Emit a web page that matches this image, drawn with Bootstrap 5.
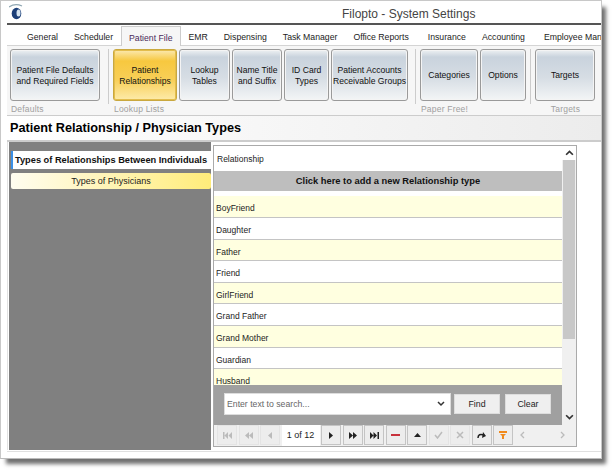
<!DOCTYPE html>
<html lang="en">
<head>
<meta charset="UTF-8">
<title>Filopto - System Settings</title>
<link href="https://cdn.jsdelivr.net/npm/bootstrap@5.3.0/dist/css/bootstrap.min.css" rel="stylesheet">
<style>
    html, body { height: 474px; overflow: hidden; background: #fff; }
    body { font-family: "Liberation Sans", Arial, sans-serif; font-size: 8.5px; color: #1c1c1c; }
    .app-window { width: 602px; height: 459px; padding-left: 6px; background: #fff; border: 1px solid #c8c8c8; border-bottom-color: #bbb; box-shadow: 5px 6px 4px -1px #707070; overflow: hidden; }
    .title-bar { height: 24px; border-bottom: 2px solid #555; position: relative; font-size: 12px; color: #444; padding: 4px 0 0 335px; }
    .title-bar svg { position: absolute; left: 2px; top: 2px; }
    .menu-tabs { height: 21px; padding-left: 12px; font-size: 8.7px; white-space: nowrap; border-bottom: 1px solid #d4d4d4; }
    .menu-tabs span { padding: 6px 8px 0; }
    .menu-tabs .active { background: #f6f6f6; border: 1px solid #ccc; border-bottom: 0; height: 20px; margin-top: 1px; padding: 5px 7px 0; color: #4a2a5a; }
    .menu-tabs .shift { margin-left: 3px; }
    .ribbon { height: 70px; background: #f6f6f6; border-bottom: 1px solid #ccc; padding: 3px 0 0 3px; }
    .ribbon-group { display: flex; flex-direction: column; }
    .ribbon-group .btn-row { display: flex; gap: 2px; }
    .ribbon-group .group-label { font-size: 8.5px; color: #a0a0a0; margin: 2px 0 0 1px; letter-spacing: .2px; }
    .ribbon-sep { width: 1px; height: 55px; background: #ccc; margin: 0 4px 0 7px; }
    .ribbon-sep.first { margin-left: 8px; }
    .ribbon-sep.last { margin-left: 4px; }
    .rb { height: 52px; padding: 1px 0 0; font-size: 8.6px; line-height: 11px; color: #111; border: 1px solid #9a9a9a; border-radius: 3px; background: linear-gradient(#eef1f3 0, #c9d3dd 14%, #d6dde4 55%, #f3f5f6 100%); box-shadow: inset 0 0 0 1px #f4f4f4; white-space: nowrap; }
    .rb.on { background: linear-gradient(#fbe9b0 0, #f7c83f 22%, #f8cf58 60%, #fdebaa 100%); border-color: #c9a83f; box-shadow: inset 0 0 0 1px #e3bd4d; }
    .rb-90 { width: 90px; }
    .rb-64 { width: 64px; }
    .rb-51 { width: 51px; }
    .rb-50 { width: 50px; }
    .rb-45 { width: 45px; }
    .rb-77 { width: 77px; }
    .rb-58 { width: 58px; }
    .rb-46 { width: 46px; }
    .rb-60 { width: 60px; }
    .page-title { height: 26px; background: linear-gradient(90deg, #fff, #ececec); border-bottom: 2px solid #ccc; font-size: 12.7px; font-weight: 700; color: #000; padding: 3px 0 0 3px; }
    .content { height: 308px; padding-left: 1px; background: #fff; border-left: 1px solid #e2e2e2; }
    .side { width: 202px; height: 308px; background: #808080; padding-top: 9px; }
    .side .item { margin-left: 2px; }
    .side .item-active { height: 18px; background: #fff; border-left: 2px solid #3b8fe6; font-size: 9.25px; font-weight: 700; color: #111; line-height: 18px; padding-left: 2px; white-space: nowrap; }
    .side .item-off { margin-top: 4px; height: 16px; background: linear-gradient(90deg, #fffdf0, #ffec7a); text-align: center; line-height: 16px; border-radius: 2px; font-size: 9px; }
    .panel { width: 364px; height: 302px; margin: 3px 0 0 2px; border: 1px solid #aaa; background: #fff; }
    .grid-wrap { min-height: 0; }
    .grid-area { width: 349px; }
    .grid-head { height: 26px; padding: 7px 0 0 3px; }
    .add-row { height: 20px; background: #bebebe; text-align: center; font-weight: 700; line-height: 21px; font-size: 9.35px; color: #111; margin-bottom: 5px; }
    .grid-rows { min-height: 0; }
    .grid-row { height: 21.6px; padding: 1px 0 0 2px; line-height: 23px; border-bottom: 1px solid #c4c4c4; overflow: hidden; }
    .grid-row.alt { background: #ffffe0; }
    .search-bar { height: 40px; background: #a0a0a0; padding: 8px 0 0 10px; }
    .search-box { width: 227px; height: 22px; background: #fff; border: 1px solid #ddd; padding: 0 5px 0 2px; color: #666; font-size: 8.7px; margin-right: 3px; }
    .search-bar .btn { width: 46px; height: 20px; padding: 0; font-size: 8.8px; background: #efefef; border: 1px solid #ddd; border-radius: 0; color: #222; margin: 1px 5px 0 0; }
    .vscroll { width: 14px; background: #f0f0f0; }
    .vscroll .arrow { height: 14px; text-align: center; line-height: 12px; }
    .vscroll .arrow.up { background: #fff; }
    .vscroll .thumb { height: 179px; background: #c8c8c8; margin: 0 1px; }
    .vscroll .track { flex-grow: 1; }
    .pager { height: 22px; background: #f0f0f0; padding-left: 3px; gap: 1.5px; align-items: center; }
    .pg { width: 20px; height: 20px; background: #ededed; border: 1px solid #c4c4c4; display: flex; align-items: center; justify-content: center; }
    .pg.off { border-color: #e4e4e4; }
    .pg.plain { width: 14px; border-color: transparent; background: none; }
    .pg.plain.prev { margin-left: 1px; }
    .pg.plain.next { margin-left: 24px; }
    .pg-text { width: 38px; height: 21px; background: #fff; text-align: center; line-height: 21px; font-size: 9px; }
    .foot-band { height: 8px; margin-top: 1px; border-top: 1px solid #e0e0e0; }
</style>
</head>
<body>
<div class="app-window">
    <div class="title-bar">
        <svg width="15" height="17" viewBox="0 0 15 17"><path d="M0 4Q6 0 13 3" stroke="#8fa6b2" stroke-width="1.300" fill="none"/><ellipse cx="7.500" cy="10.500" rx="4.800" ry="5.800" fill="#1c3f78"/><ellipse cx="9.500" cy="10" rx="2" ry="3.500" fill="#d6e4f0"/></svg>
        Filopto - System Settings
    </div>
    <div class="menu-tabs d-flex">
        <span>General</span><span>Scheduler</span><span class="active">Patient File</span><span>EMR</span><span>Dispensing</span><span>Task Manager</span><span>Office Reports</span><span class="shift">Insurance</span><span>Accounting</span><span class="shift">Employee Management</span>
    </div>
    <div class="ribbon d-flex">
        <div class="ribbon-group">
            <div class="btn-row"><button class="btn rb rb-90">Patient File Defaults<br>and Required Fields</button></div>
            <div class="group-label">Defaults</div>
        </div>
        <div class="ribbon-sep first"></div>
        <div class="ribbon-group">
            <div class="btn-row">
                <button class="btn rb on rb-64">Patient<br>Relationships</button>
                <button class="btn rb rb-51">Lookup<br>Tables</button>
                <button class="btn rb rb-50">Name Title<br>and Suffix</button>
                <button class="btn rb rb-45">ID Card<br>Types</button>
                <button class="btn rb rb-77">Patient Accounts<br>Receivable Groups</button>
            </div>
            <div class="group-label">Lookup Lists</div>
        </div>
        <div class="ribbon-sep"></div>
        <div class="ribbon-group">
            <div class="btn-row">
                <button class="btn rb rb-58">Categories</button>
                <button class="btn rb rb-46">Options</button>
            </div>
            <div class="group-label">Paper Free!</div>
        </div>
        <div class="ribbon-sep last"></div>
        <div class="ribbon-group">
            <div class="btn-row"><button class="btn rb rb-60">Targets</button></div>
            <div class="group-label text-center">Targets</div>
        </div>
    </div>
    <div class="page-title">Patient Relationship / Physician Types</div>
    <div class="content d-flex">
        <div class="side">
            <div class="item item-active">Types of Relationships Between Individuals</div>
            <div class="item item-off">Types of Physicians</div>
        </div>
        <div class="panel d-flex flex-column">
            <div class="grid-wrap d-flex flex-grow-1">
                <div class="grid-area d-flex flex-column">
                    <div class="grid-head">Relationship</div>
                    <div class="add-row">Click here to add a new Relationship type</div>
                    <div class="grid-rows flex-grow-1 overflow-hidden">
                        <div class="grid-row alt">BoyFriend</div>
                        <div class="grid-row">Daughter</div>
                        <div class="grid-row alt">Father</div>
                        <div class="grid-row">Friend</div>
                        <div class="grid-row alt">GirlFriend</div>
                        <div class="grid-row">Grand Father</div>
                        <div class="grid-row alt">Grand Mother</div>
                        <div class="grid-row">Guardian</div>
                        <div class="grid-row alt">Husband</div>
                    </div>
                    <div class="search-bar d-flex">
                        <div class="search-box d-flex align-items-center justify-content-between">
                            <span>Enter text to search...</span>
                            <svg width="8" height="6" viewBox="0 0 8 6"><path d="M1 1l3 3 3-3" stroke="#333" stroke-width="1.500" fill="none"/></svg>
                        </div>
                        <button class="btn">Find</button>
                        <button class="btn">Clear</button>
                    </div>
                </div>
                <div class="vscroll d-flex flex-column">
                    <div class="arrow up"><svg width="9" height="7" viewBox="0 0 8 6"><path d="M1 5l3-3 3 3" stroke="#333" stroke-width="1.500" fill="none"/></svg></div>
                    <div class="thumb"></div>
                    <div class="track"></div>
                    <div class="arrow"><svg width="9" height="7" viewBox="0 0 8 6"><path d="M1 1l3 3 3-3" stroke="#333" stroke-width="1.500" fill="none"/></svg></div>
                </div>
            </div>
            <div class="pager d-flex">
                <div class="pg off"><svg width="9" height="7" viewBox="0 0 9 7" fill="#bbb"><path d="M0 0h1.500v7H0zM5 0v7L1.500 3.500zM9 0v7L5.500 3.500z"/></svg></div>
                <div class="pg off"><svg width="8" height="7" viewBox="0 0 8 7" fill="#bbb"><path d="M4 0v7L0 3.500zM8 0v7L4 3.500z"/></svg></div>
                <div class="pg off"><svg width="4" height="7" viewBox="0 0 4 7" fill="#bbb"><path d="M4 0v7L0 3.500z"/></svg></div>
                <div class="pg-text">1 of 12</div>
                <div class="pg"><svg width="4" height="7" viewBox="0 0 4 7" fill="#222"><path d="M0 0v7l4-3.500z"/></svg></div>
                <div class="pg"><svg width="8" height="7" viewBox="0 0 8 7" fill="#222"><path d="M0 0v7l4-3.500zM4 0v7l4-3.500z"/></svg></div>
                <div class="pg"><svg width="9" height="7" viewBox="0 0 9 7" fill="#222"><path d="M0 0v7l3.500-3.500zM3.500 0v7L7 3.500zM7.500 0H9v7H7.500z"/></svg></div>
                <div class="pg"><svg width="9" height="3" viewBox="0 0 9 3"><rect width="9" height="2" fill="#c8323c"/></svg></div>
                <div class="pg"><svg width="7" height="4" viewBox="0 0 7 4" fill="#222"><path d="M3.500 0L7 4H0z"/></svg></div>
                <div class="pg off"><svg width="9" height="8" viewBox="0 0 9 8"><path d="M1 4l2.500 3L8 1" stroke="#bbb" stroke-width="1.500" fill="none"/></svg></div>
                <div class="pg off"><svg width="8" height="8" viewBox="0 0 8 8"><path d="M1 1l6 6M7 1l-6 6" stroke="#bbb" stroke-width="1.500"/></svg></div>
                <div class="pg"><svg width="10" height="8" viewBox="0 0 10 8"><path d="M1 7Q1 2 7 4" stroke="#222" stroke-width="1.500" fill="none"/><path d="M6 1l3 4-4 2z" fill="#222"/></svg></div>
                <div class="pg"><svg width="8" height="8" viewBox="0 0 8 8"><path d="M0 0h8v2H0zM1 3h6L5 5v3H3V5z" fill="#f08a1d"/></svg></div>
                <div class="pg plain prev"><svg width="5" height="8" viewBox="0 0 5 8"><path d="M4 1L1 4l3 3" stroke="#bbb" stroke-width="1.300" fill="none"/></svg></div>
                <div class="pg plain next"><svg width="5" height="8" viewBox="0 0 5 8"><path d="M1 1l3 3-3 3" stroke="#bbb" stroke-width="1.300" fill="none"/></svg></div>
            </div>
        </div>
    </div>
    <div class="foot-band"></div>
</div>
<script src="https://cdn.jsdelivr.net/npm/bootstrap@5.3.0/dist/js/bootstrap.bundle.min.js"></script>
</body>
</html>
